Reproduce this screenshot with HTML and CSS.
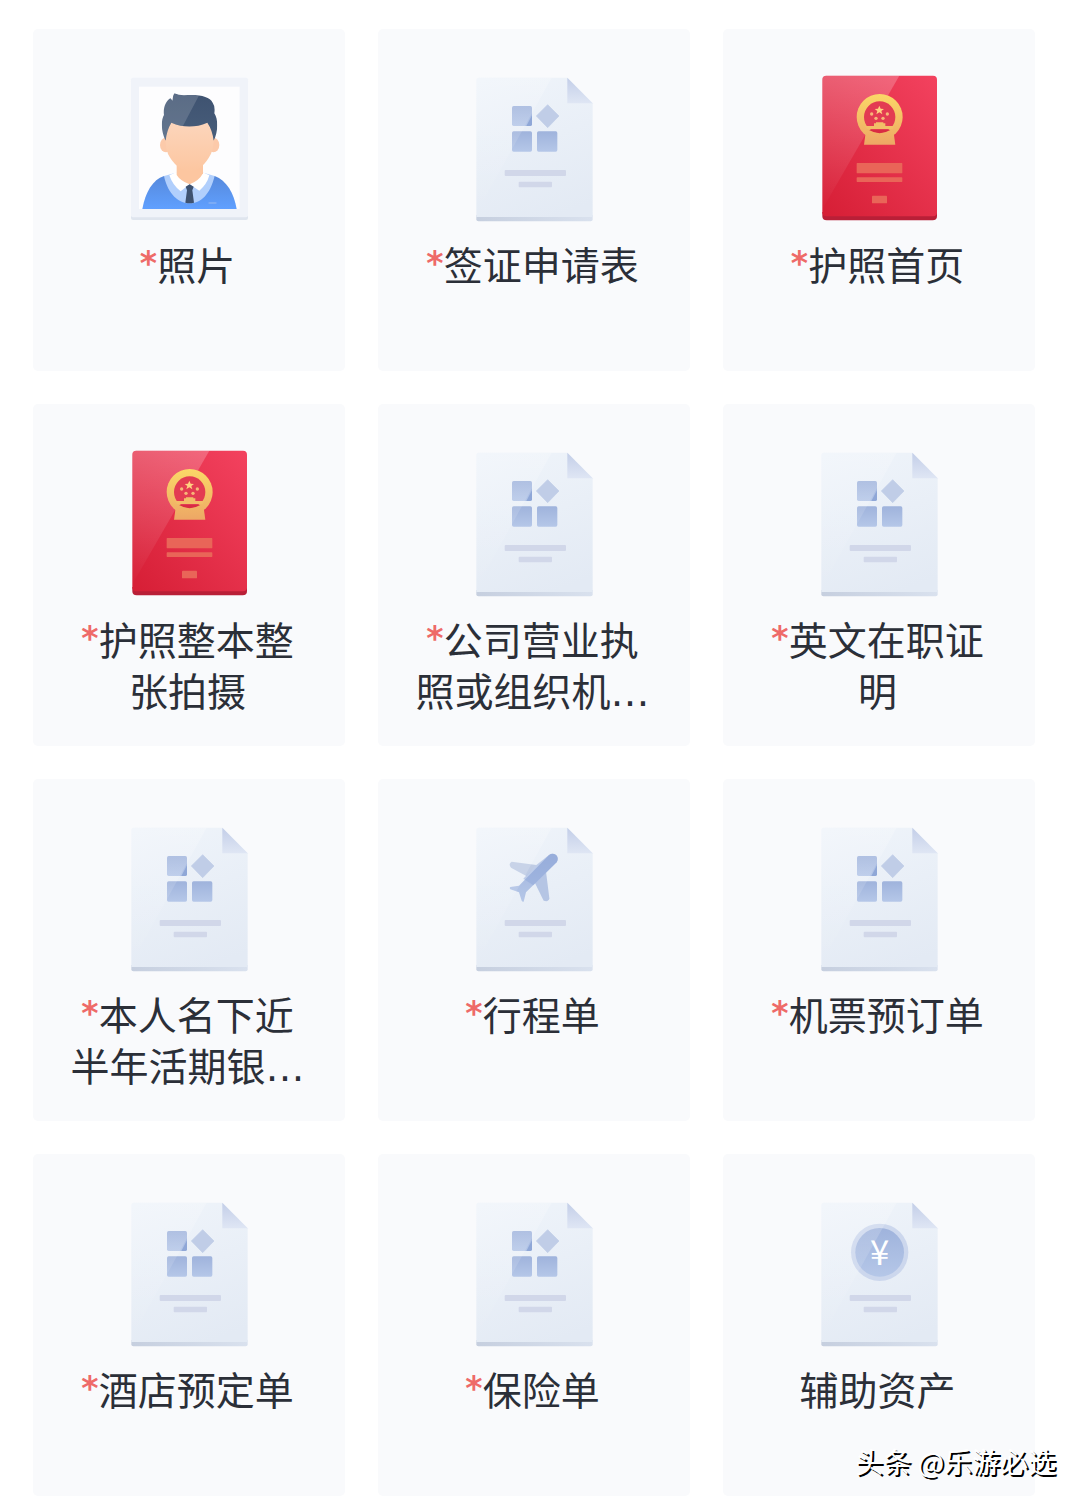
FILE: index.html
```html
<!DOCTYPE html>
<html lang="zh-CN">
<head>
    <meta charset="UTF-8">
    <meta name="viewport" content="width=device-width, initial-scale=1.0">
    <title>签证材料</title>
    <link rel="stylesheet" href="styles.css">
</head>
<body>
    <!-- Shared icon shapes -->
    <svg class="sprite" width="0" height="0" aria-hidden="true">
        <defs>
            <linearGradient id="paper" gradientUnits="userSpaceOnUse" x1="100" y1="53" x2="260" y2="484">
                <stop offset="0" stop-color="#eff4fa"/>
                <stop offset="1" stop-color="#e3eaf4"/>
            </linearGradient>
            <linearGradient id="edge" x1="0" y1="0" x2="1" y2="0">
                <stop offset="0" stop-color="#c6cfdf"/>
                <stop offset="1" stop-color="#d9e1ee"/>
            </linearGradient>
            <linearGradient id="fold" x1="0" y1="0" x2="0" y2="1">
                <stop offset="0" stop-color="#c3cee8"/>
                <stop offset="1" stop-color="#dfe6f4"/>
            </linearGradient>
            <linearGradient id="blue" x1="0" y1="0" x2="0" y2="1">
                <stop offset="0" stop-color="#9fb3dc"/>
                <stop offset="1" stop-color="#b5c7e8"/>
            </linearGradient>
            <linearGradient id="sheen" gradientUnits="userSpaceOnUse" x1="120" y1="53" x2="120" y2="460">
                <stop offset="0" stop-color="#fff" stop-opacity="0.22"/>
                <stop offset="1" stop-color="#fff" stop-opacity="0"/>
            </linearGradient>
            <linearGradient id="red" x1="1" y1="0" x2="0" y2="1">
                <stop offset="0" stop-color="#f3425f"/>
                <stop offset="1" stop-color="#d61e35"/>
            </linearGradient>
            <linearGradient id="gold" gradientUnits="userSpaceOnUse" x1="0" y1="101" x2="0" y2="254">
                <stop offset="0" stop-color="#fbd867"/>
                <stop offset="1" stop-color="#eda765"/>
            </linearGradient>
            <linearGradient id="skin" x1="0" y1="0" x2="0" y2="1">
                <stop offset="0" stop-color="#fcd6bd"/>
                <stop offset="1" stop-color="#fcc6a0"/>
            </linearGradient>
            <linearGradient id="sweater" x1="0" y1="0" x2="0" y2="1">
                <stop offset="0" stop-color="#5689dc"/>
                <stop offset="1" stop-color="#60a0ff"/>
            </linearGradient>
            <linearGradient id="hair" x1="0" y1="0" x2="0" y2="1">
                <stop offset="0" stop-color="#3e5270"/>
                <stop offset="1" stop-color="#485e7b"/>
            </linearGradient>
            <clipPath id="hair-clip">
                <path d="M167 242C155 220 151 184 162 165C159 143 168 123 181 115L188 122Q187 110 193 100Q205 106 222 106C266 102 299 109 308 128Q316 139 313 160C326 180 324 216 311 242Q307 210 292 188Q238 211 184 188Q170 211 167 242Z"/>
            </clipPath>

            <symbol id="sheet" viewBox="57 42 360 450">
                <path d="M64 465H413V478Q413 484 407 484H70Q64 484 64 478Z" fill="url(#edge)"/>
                <path d="M64 59Q64 53 70 53H337L413 130V471H64Z" fill="url(#paper)"/>
                <path d="M337 53L413 130H337Z" fill="url(#fold)"/>
                <rect x="149" y="330" width="184" height="18" rx="3" fill="#d1d7e9"/>
                <rect x="191" y="365" width="100" height="17" rx="3" fill="#d1d7e9"/>
            </symbol>

            <symbol id="icon-form" viewBox="57 42 360 450">
                <use href="#sheet" x="57" y="42" width="360" height="450"/>
                <rect x="171" y="138" width="60" height="60" rx="5" fill="url(#blue)"/>
                <rect x="171" y="214" width="60" height="61" rx="5" fill="url(#blue)"/>
                <rect x="246" y="214" width="61" height="61" rx="5" fill="url(#blue)"/>
                <path d="M278 134L312 168L278 203L244 168Z" fill="#c0cde7" stroke="#c0cde7" stroke-width="2" stroke-linejoin="round"/>
                <path d="M231 166V193Q231 198 226 198H214Z" fill="#8fa7d7"/>
                <path d="M64 53H290L64 460Z" fill="url(#sheen)"/>
            </symbol>

            <symbol id="icon-trip" viewBox="57 42 360 450">
                <use href="#sheet" x="57" y="42" width="360" height="450"/>
                <path d="M170 155L244 165L214 198L168 173Q159 161 170 155Z" fill="#becbe4"/>
                <path d="M273 184L283 265Q281 277 266 272L238 215Z" fill="#b5c5e4"/>
                <path d="M282 135C298 124 316 140 305 157L213 247L206 275Q202 276 200 272L192 247L166 238Q162 234 166 231L192 227Z" fill="url(#blue)"/>
                <path d="M244 165L282 135C298 124 316 140 305 157L235 226L205 206Z" fill="#8fa8da" opacity=".5"/>
                <path d="M64 53H290L64 460Z" fill="url(#sheen)"/>
            </symbol>

            <symbol id="icon-asset" viewBox="57 42 360 450">
                <use href="#sheet" x="57" y="42" width="360" height="450"/>
                <circle cx="239" cy="202" r="86" fill="#ccd7ed"/>
                <circle cx="239" cy="202" r="73" fill="url(#blue)"/>
                <path d="M64 53H290L64 460Z" fill="url(#sheen)"/>
                <text class="yuan" x="239" y="240" text-anchor="middle">¥</text>
            </symbol>

            <symbol id="icon-passport" viewBox="57 42 360 450">
                <path d="M67 456H411V468Q411 481 398 481H80Q67 481 67 468Z" fill="#b91f37"/>
                <rect x="67" y="47" width="344" height="422" rx="12" fill="url(#red)"/>
                <path d="M67 60Q67 47 80 47H298L67 448Z" fill="url(#sheen)"/>
                <path d="M197 218H281L286 254H192Z" fill="url(#gold)"/>
                <circle cx="239" cy="171" r="69" fill="url(#gold)"/>
                <circle cx="239" cy="171" r="47" fill="#e33b52"/>
                <path d="M195 198H222V190H228V187H250V190H256V198H283L278 207H201Z" fill="#f2bd68"/>
                <path d="M207 210H271Q239 229 207 210Z" fill="#d92b43"/>
                <path d="M238 137L242 146L252 147L244 153L247 163L238 157L229 163L232 153L224 147L234 146Z" fill="#ffd180"/>
                <g fill="#f7b678">
                    <circle cx="215" cy="162" r="5"/>
                    <circle cx="262" cy="162" r="5"/>
                    <circle cx="228" cy="175" r="5"/>
                    <circle cx="249" cy="175" r="5"/>
                </g>
                <g fill="#e96558">
                    <rect x="170" y="309" width="137" height="31" rx="2"/>
                    <rect x="170" y="352" width="137" height="14" rx="2"/>
                    <rect x="216" y="407" width="45" height="23" rx="2"/>
                </g>
            </symbol>

            <symbol id="icon-photo" viewBox="57 42 360 450">
                <rect x="63" y="59" width="351" height="421" rx="6" fill="#dfe5ee"/>
                <rect x="63" y="53" width="351" height="419" rx="6" fill="#f0f3f9"/>
                <rect x="87" y="80" width="302" height="367" fill="#fdfdfe"/>
                <path d="M97 447C106 397 128 359 162 348H314C350 362 371 398 380 447Z" fill="url(#sweater)"/>
                <path d="M162 348C170 389 197 430 239 430S304 389 314 348L280 338H198Z" fill="#b1cffc"/>
                <path d="M198 337L178 346Q188 376 212 394L239 373L268 392Q291 373 298 346L278 337Z" fill="#fff"/>
                <path d="M200 305H279V340Q268 362 239 373Q211 363 200 345Z" fill="#fcc6a0"/>
                <ellipse cx="168" cy="255" rx="18" ry="22" fill="#fccaaa"/>
                <ellipse cx="310" cy="255" rx="18" ry="22" fill="#fccaaa"/>
                <path d="M165 180H313Q316 250 303 281Q277 332 239 334Q199 330 174 282Q162 250 165 180Z" fill="url(#skin)"/>
                <g clip-path="url(#hair-clip)">
                    <rect x="150" y="95" width="180" height="150" fill="url(#hair)"/>
                    <path d="M150 95H273L186 260H150Z" fill="#fff" opacity=".15"/>
                </g>
                <path d="M227 380L239 373L251 380L247 391L252 428Q239 432 226 428L231 391Z" fill="#3e5270"/>
                <rect x="295" y="426" width="25" height="6" rx="3" fill="#7babf5"/>
            </symbol>
        </defs>
    </svg>

    <main>
        <ul class="material-list">
            <li class="material-card">
                <svg class="material-icon" aria-hidden="true"><use href="#icon-photo"/></svg>
                <p class="material-name"><span class="required">*</span>照片</p>
            </li>
            <li class="material-card">
                <svg class="material-icon" aria-hidden="true"><use href="#icon-form"/></svg>
                <p class="material-name"><span class="required">*</span>签证申请表</p>
            </li>
            <li class="material-card">
                <svg class="material-icon" aria-hidden="true"><use href="#icon-passport"/></svg>
                <p class="material-name"><span class="required">*</span>护照首页</p>
            </li>
            <li class="material-card">
                <svg class="material-icon" aria-hidden="true"><use href="#icon-passport"/></svg>
                <p class="material-name"><span class="required">*</span>护照整本整张拍摄</p>
            </li>
            <li class="material-card">
                <svg class="material-icon" aria-hidden="true"><use href="#icon-form"/></svg>
                <p class="material-name"><span class="required">*</span>公司营业执照或组织机…</p>
            </li>
            <li class="material-card">
                <svg class="material-icon" aria-hidden="true"><use href="#icon-form"/></svg>
                <p class="material-name"><span class="required">*</span>英文在职证明</p>
            </li>
            <li class="material-card">
                <svg class="material-icon" aria-hidden="true"><use href="#icon-form"/></svg>
                <p class="material-name"><span class="required">*</span>本人名下近半年活期银…</p>
            </li>
            <li class="material-card">
                <svg class="material-icon" aria-hidden="true"><use href="#icon-trip"/></svg>
                <p class="material-name"><span class="required">*</span>行程单</p>
            </li>
            <li class="material-card">
                <svg class="material-icon" aria-hidden="true"><use href="#icon-form"/></svg>
                <p class="material-name"><span class="required">*</span>机票预订单</p>
            </li>
            <li class="material-card">
                <svg class="material-icon" aria-hidden="true"><use href="#icon-form"/></svg>
                <p class="material-name"><span class="required">*</span>酒店预定单</p>
            </li>
            <li class="material-card">
                <svg class="material-icon" aria-hidden="true"><use href="#icon-form"/></svg>
                <p class="material-name"><span class="required">*</span>保险单</p>
            </li>
            <li class="material-card">
                <svg class="material-icon" aria-hidden="true"><use href="#icon-asset"/></svg>
                <p class="material-name">辅助资产</p>
            </li>
        </ul>
        <div class="watermark">头条 @乐游必选</div>
    </main>
</body>
</html>
```
FILE: styles.css
```css
* {
    box-sizing: border-box;
}

body {
    margin: 0;
    background: #fff;
    color: #2b2f38;
    font-family: "DejaVu Sans", "Noto Sans CJK SC", sans-serif;
}

main {
    position: relative;
    padding: 29px 45px 5px 33px;
}

.sprite {
    position: absolute;
}

.material-list {
    display: grid;
    grid-template-columns: repeat(3, 1fr);
    gap: 33px;
    margin: 0;
    padding: 0;
    list-style: none;
}

.material-card {
    display: flex;
    flex-direction: column;
    align-items: center;
    padding: 45px 36px 28px;
    background: #f9fafc;
    border-radius: 5px;
}

.material-icon {
    width: 120px;
    height: 150px;
}

.material-name {
    width: 100%;
    min-height: 102px;
    margin: 17px 0 0;
    padding-right: 3px;
    font-size: 39px;
    line-height: 51px;
    text-align: center;
}

.required {
    color: #ee6a68;
    font-size: 33px;
    font-weight: bold;
    line-height: 1;
    vertical-align: 5px;
}

.yuan {
    fill: #fff;
    font-family: "Noto Sans CJK SC", sans-serif;
    font-size: 104px;
}

.watermark {
    position: absolute;
    right: 24px;
    bottom: 20px;
    color: #fff;
    font-family: "Noto Sans CJK SC", sans-serif;
    font-size: 28px;
    line-height: 40px;
    text-shadow: 2px 2px 0 #000;
}
```
